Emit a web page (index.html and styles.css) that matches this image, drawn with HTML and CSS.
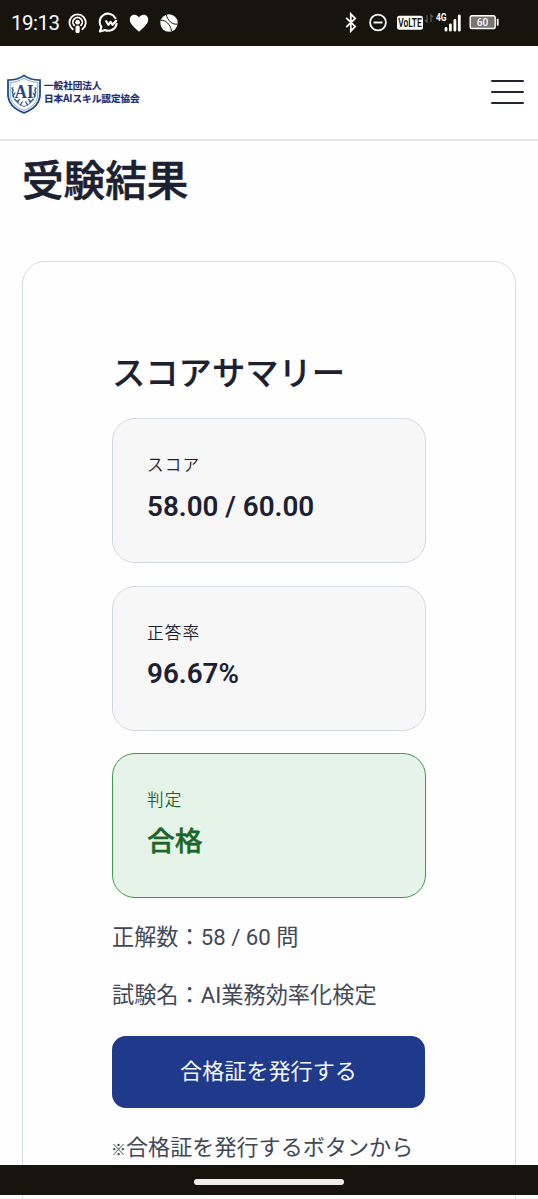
FILE: index.html
```html
<!DOCTYPE html>
<html lang="ja">
<head>
<meta charset="utf-8">
<title>受験結果</title>
<link rel="stylesheet" href="styles.css">
</head>
<body>
<div class="screen">
  <div class="status">
    <span class="clock">19:13</span>
    <svg class="st-left" width="110" height="22" viewBox="0 0 110 22" fill="none" stroke="#fff">
      <g stroke-width="1.8" stroke-linecap="round">
        <path d="M4.8 17.2A8.2 8.2 0 1 1 14.4 17.2"/>
        <path d="M6.2 13.4A4.7 4.7 0 1 1 13 13.4"/>
      </g>
      <circle cx="9.6" cy="10.2" r="2.4" fill="#fff" stroke="none"/>
      <rect x="7.5" y="13.4" width="4.2" height="7.6" rx="1.6" fill="#fff" stroke="none"/>
      <path d="M47.4 6.2A8.3 8.3 0 1 0 33.4 15L31.9 19.4L37 18A8.3 8.3 0 0 0 48.6 11.8" stroke-width="2.1" stroke-linecap="round" stroke-linejoin="round"/>
      <path d="M38.2 9.2L40.4 12.8L42.6 9.8L44.6 12.8L48.2 8.8" stroke-width="2.2" stroke-linecap="round" stroke-linejoin="round"/>
      <path d="M71 19.7C66 15.3 61.8 12 61.8 7.6C61.8 2.3 68.3 1.2 71 5.4C73.7 1.2 80.2 2.3 80.2 7.6C80.2 12 76 15.3 71 19.7Z" fill="#fff" stroke="none"/>
      <circle cx="101" cy="11" r="8.7" fill="#fff" stroke="none"/>
      <path d="M92.7 8.3C97 7.6 102.5 12 103.5 19M98.3 2.5C99.3 8.2 104.5 13.3 109.5 12" stroke="#17130d" stroke-width="1"/>
    </svg>
    <svg class="st-right" width="160" height="24" viewBox="0 0 160 24" fill="none" stroke="#fff">
      <path d="M1.2 6.8L10.2 15.6L5.8 20V3L10.2 7.4L1.2 16.2" stroke-width="1.8"/>
      <circle cx="33" cy="11.5" r="7.9" stroke-width="1.8"/>
      <path d="M28.5 11.5H37.5" stroke-width="1.9"/>
      <rect x="52" y="4.8" width="26" height="14" rx="2.5" fill="#fff" stroke="none"/>
      <text class="volte" x="53.2" y="16.3" textLength="23.6" lengthAdjust="spacingAndGlyphs">VoLTE</text>
      <path d="M82 4V11L80 8.8M86 11V4L88 6.2" stroke="#66635e" stroke-width="1.1"/>
      <text class="net" x="91" y="9.6" textLength="10.6" lengthAdjust="spacingAndGlyphs">4G</text>
      <path d="M101 17.5V19.2M105.4 14V19.2M109.9 9.4V19.2M114.3 5V19.2" stroke-width="2.8" stroke-linecap="round"/>
      <rect x="125.2" y="4.7" width="25" height="12.8" rx="1.8" fill="#77746f" stroke-width="1.4"/>
      <path d="M152.7 7.8V14.6" stroke-width="1.8"/>
      <text class="bat" x="131.7" y="15.3" textLength="11.6" lengthAdjust="spacingAndGlyphs">60</text>
    </svg>
  </div>
  <header class="header">
    <div class="brand">
      <svg width="36" height="40" viewBox="0 0 36 40">
        <path d="M18 1.4C22 4.4 28 6.1 34 6.2V20C34 29.5 27 35.5 18 38.8C9 35.5 2 29.5 2 20V6.2C8 6.1 14 4.4 18 1.4Z" fill="#fff" stroke="#1c4a86" stroke-width="1.8"/>
        <path d="M18 4.2C22 6.7 26.8 8.2 31.8 8.5V20C31.8 28.2 26 33.3 18 36.4C10 33.3 4.2 28.2 4.2 20V8.5C9.2 8.2 14 6.7 18 4.2Z" fill="none" stroke="#5e83ae" stroke-width=".7"/>
        <path d="M7 13C5.2 22 9 29.5 18 32.5C27 29.5 30.8 22 29 13" fill="none" stroke="#31598e" stroke-width=".8"/>
        <path d="M6 14L7.2 17M6 18L7.6 21M6.8 22L9.6 24.5M9.2 26L12.6 28M9 19L7.4 21.5M10.6 22.5L8.8 25M13.4 25.4L11.4 28M16.2 27.8L14.4 31M30 14L28.8 17M30 18L28.4 21M29.2 22L26.4 24.5M26.8 26L23.4 28M27 19L28.6 21.5M25.4 22.5L27.2 25M22.6 25.4L24.6 28M19.8 27.8L21.6 31" fill="none" stroke="#31598e" stroke-width="1.3" stroke-linecap="round"/>
        <text class="crest" x="8.8" y="23.6" textLength="18.6" lengthAdjust="spacingAndGlyphs">AI</text>
      </svg>
      <div class="brand-name"><span>一般社団法人</span><span>日本AIスキル認定協会</span></div>
    </div>
    <div class="menu"><i></i><i></i><i></i></div>
  </header>
  <main class="main">
    <h1 class="title">受験結果</h1>
    <section class="card">
      <h2 class="subtitle">スコアサマリー</h2>
      <div class="stats">
        <div class="stat"><span class="label">スコア</span><strong class="value">58.00 / 60.00</strong></div>
        <div class="stat"><span class="label">正答率</span><strong class="value">96.67%</strong></div>
        <div class="stat pass"><span class="label">判定</span><strong class="value kanji">合格</strong></div>
      </div>
      <p class="text">正解数：58 / 60 問</p>
      <p class="text">試験名：AI業務効率化検定</p>
      <div class="button">合格証を発行する</div>
      <p class="text note"><span class="mark">※</span>合格証を発行するボタンから</p>
    </section>
  </main>
  <div class="navbar"><span class="handle"></span></div>
</div>
</body>
</html>
```
FILE: styles.css
```css
* { box-sizing: border-box; }
body {
  margin: 0;
  background: #fefefe;
  font-family: Roboto, "Noto Sans CJK JP", sans-serif;
  color: #1c2030;
}
.screen {
  position: relative;
  width: 538px;
  height: 1199px;
  overflow: hidden;
  display: flex;
  flex-direction: column;
}
.status {
  height: 46px;
  flex: none;
  background: #17130d;
  display: flex;
  align-items: center;
  padding: 0 33px 0 11px;
  color: #fff;
}
.clock { width: 57px; font-size: 20.5px; letter-spacing: -.5px; line-height: 46px; }
.st-right { margin-left: auto; overflow: visible; }
.volte { font: 600 12.5px Roboto, sans-serif; fill: #17130d; stroke: none; }
.net { font: 700 11.5px Roboto, sans-serif; fill: #fff; stroke: none; }
.bat { font: 500 11px Roboto, sans-serif; fill: #fff; stroke: none; }
.header {
  height: 95px;
  flex: none;
  background: #fff;
  border-bottom: 2px solid #e1e3e8;
  display: flex;
  align-items: center;
  justify-content: space-between;
  padding: 0 14px 0 6px;
}
.brand { display: flex; align-items: center; gap: 2px; padding-top: 2px; }
.crest { font: 700 18.5px "Liberation Serif", serif; fill: #1c4a86; stroke: #fff; stroke-width: 1.4px; paint-order: stroke; }
.brand-name {
  display: flex;
  flex-direction: column;
  margin-top: -4px;
  font: 700 9.6px/12.5px "Noto Sans CJK JP", sans-serif;
  -webkit-text-stroke: .2px currentColor;
  color: #1f2f72;
  white-space: nowrap;
}
.menu { width: 33px; display: flex; flex-direction: column; gap: 8.5px; margin-top: -1px; }
.menu i { height: 2.5px; border-radius: 1px; background: #1f2533; }
.main { padding: 0 22px; }
.title {
  margin: 0;
  height: 120px;
  padding-top: 2.5px;
  font-size: 41.6px;
  line-height: 76px;
  font-weight: 500;
  -webkit-text-stroke: .6px currentColor;
}
.card {
  height: 1000px;
  border: 1.5px solid #d5dce4;
  border-radius: 23px;
  padding: 88px 89px 0;
  background: #fefefe;
}
.subtitle {
  margin: 0;
  font-size: 33.3px;
  line-height: 48px;
  font-weight: 500;
  -webkit-text-stroke: .2px currentColor;
  white-space: nowrap;
}
.stats { display: flex; flex-direction: column; gap: 22.5px; margin-top: 20px; }
.stat {
  height: 145px;
  width: 314px;
  border: 1px solid #d2d8e2;
  border-radius: 23px;
  background: #f7f7f8;
  padding: 33px 34px;
  display: flex;
  flex-direction: column;
}
.label { font-size: 16.6px; letter-spacing: 1.1px; line-height: 28px; font-weight: 350; }
.value { font-size: 27.8px; line-height: 40px; margin-top: 6.5px; font-weight: 600; }
.kanji { font-weight: 500; -webkit-text-stroke: .4px currentColor; }
.pass { background: #e6f3e9; border-color: #43964e; color: #1b6528; }
.text { margin: 0; font-size: 22.2px; line-height: 40px; color: #424856; white-space: nowrap; }
.stats + .text { margin-top: 19px; }
.text + .text { margin-top: 18px; }
.button {
  height: 72px;
  width: 313px;
  margin-top: 21px;
  border-radius: 14px;
  background: #1f3a8a;
  color: #f4f7ff;
  font-size: 22.1px;
  line-height: 70px;
  text-align: center;
}
.note { margin-top: 18.5px; font-size: 22.1px; }
.mark { display: inline-block; width: 14px; font-size: 15px; font-weight: 500; text-indent: -1px; }
.navbar {
  position: absolute;
  left: 0;
  top: 1165px;
  width: 538px;
  height: 30px;
  background: #17130d;
  display: flex;
  align-items: center;
  justify-content: center;
  padding-top: 4px;
}
.handle { width: 150px; height: 6px; border-radius: 3px; background: #f0eeec; }
```
